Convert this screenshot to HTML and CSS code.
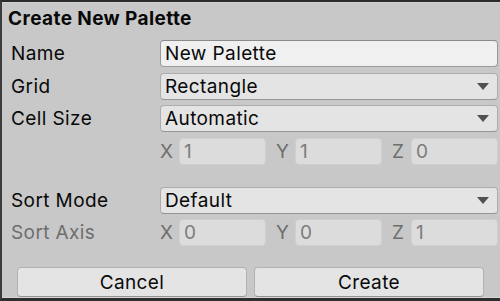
FILE: index.html
```html
<!DOCTYPE html>
<html lang="en">
<head>
    <meta charset="UTF-8">
    <title>Create New Palette</title>
    <link rel="stylesheet" href="styles.css">
</head>
<body>
    <div class="window">
        <h1 class="title">Create New Palette</h1>

        <div class="form">
            <div class="row">
                <div class="label">Name</div>
                <div class="field text-field">New Palette</div>
            </div>
            <div class="row">
                <div class="label">Grid</div>
                <div class="field dropdown">Rectangle<span class="arrow"></span></div>
            </div>
            <div class="row">
                <div class="label">Cell Size</div>
                <div class="field dropdown">Automatic<span class="arrow"></span></div>
            </div>
            <div class="row">
                <div class="label"></div>
                <div class="vector">
                    <div class="axis"><span class="axis-label">X</span><div class="field disabled">1</div></div>
                    <div class="axis"><span class="axis-label">Y</span><div class="field disabled">1</div></div>
                    <div class="axis"><span class="axis-label">Z</span><div class="field disabled">0</div></div>
                </div>
            </div>

            <div class="row group-start">
                <div class="label">Sort Mode</div>
                <div class="field dropdown">Default<span class="arrow"></span></div>
            </div>
            <div class="row">
                <div class="label muted">Sort Axis</div>
                <div class="vector">
                    <div class="axis"><span class="axis-label">X</span><div class="field disabled">0</div></div>
                    <div class="axis"><span class="axis-label">Y</span><div class="field disabled">0</div></div>
                    <div class="axis"><span class="axis-label">Z</span><div class="field disabled">1</div></div>
                </div>
            </div>
        </div>

        <div class="buttons">
            <button class="button">Cancel</button>
            <button class="button">Create</button>
        </div>
    </div>
</body>
</html>
```

FILE: styles.css
```css
* {
    margin: 0;
    padding: 0;
    box-sizing: border-box;
}

body {
    font-family: 'Inter', 'Noto Sans', sans-serif;
    background: #c8c8c8;
    color: #090909;
    font-size: 19px;
    letter-spacing: 0.4px;
}

.window {
    width: 500px;
    height: 301px;
    border-top: 2px solid #2b2b2b;
    border-left: 2px solid #3c3c3c;
    border-bottom: 3px solid #2e2e2e;
    box-shadow: inset 0 1px 0 #d2d2d2, inset 0 -1px 0 #d6d6d6;
    display: flex;
    flex-direction: column;
}

.title {
    font-size: 19px;
    font-weight: 700;
    line-height: 22px;
    padding: 6px 0 0 6px;
    height: 38px;
}

.form {
    display: flex;
    flex-direction: column;
    gap: 5.5px;
    padding-right: 2px;
}

.row {
    display: flex;
    align-items: center;
    height: 27px;
}

.row.group-start {
    margin-top: 16.5px;
}

.label {
    width: 158px;
    padding-left: 9px;
}

.label.muted {
    color: #6e6e6e;
}

.field {
    flex: 1;
    height: 27px;
    display: flex;
    align-items: center;
    padding-left: 4px;
    border-radius: 4px;
    border: 1px solid #a3a3a3;
}

.text-field {
    background: #f0f0f0;
    border-color: #9a9a9a;
    border-top-color: #8a8a8a;
}

.dropdown {
    background: #e4e4e4;
    border-color: #adadad;
    border-bottom-color: #959595;
    justify-content: space-between;
    padding-right: 8px;
}

.arrow {
    width: 0;
    height: 0;
    border-left: 6px solid transparent;
    border-right: 6px solid transparent;
    border-top: 7px solid #505050;
}

.vector {
    flex: 1;
    display: flex;
    gap: 10px;
}

.axis {
    flex: 1;
    display: flex;
    align-items: center;
}

.axis-label {
    width: 19px;
    color: #6e6e6e;
}

.field.disabled {
    background: #dcdcdc;
    border-color: #cfcfcf;
    color: #7c7c7c;
}

.buttons {
    display: flex;
    gap: 7px;
    padding: 0 16px 0 15px;
    margin-top: auto;
    margin-bottom: 1px;
}

.button {
    flex: 1;
    height: 30px;
    font-family: inherit;
    font-size: 19px;
    letter-spacing: 0.4px;
    color: #090909;
    background: #e4e4e4;
    border: 1px solid #b2b2b2;
    border-bottom-color: #939393;
    border-radius: 4px;
}
```
